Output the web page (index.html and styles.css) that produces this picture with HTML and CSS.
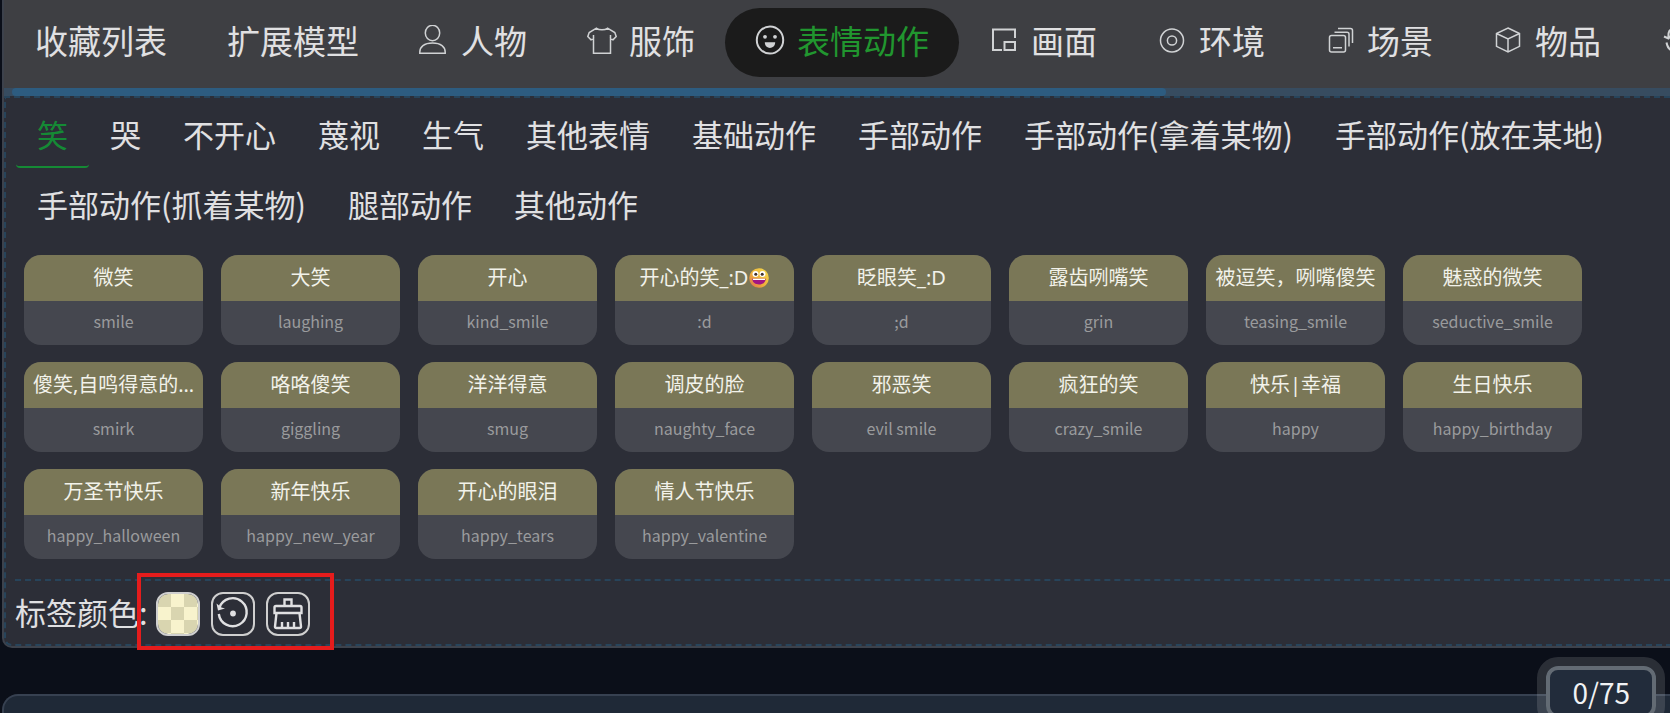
FILE: index.html
```html
<!DOCTYPE html>
<html lang="zh-CN">
<head>
<meta charset="utf-8">
<title>表情动作</title>
<link rel="stylesheet" href="styles.css">
</head>
<body>
<main class="page">
  <section class="panel">
    <nav class="groups" aria-label="分类">
      <button class="group">收藏列表</button>
      <button class="group">扩展模型</button>
      <button class="group"><svg class="icon" viewBox="0 0 30 30"><ellipse cx="13.500" cy="8" rx="7.200" ry="7.700"/><path d="M.8 28.300V27C.8 22 5 18 13.500 18s12.700 4 12.700 9v1.300z"/></svg>人物</button>
      <button class="group"><svg class="icon" viewBox="0 0 30 30"><path d="M9.500 3.200 2.200 7.500.8 11.500l3.200 3.300 2.500-1V28.300h17V13.800l2.500 1 3.200-3.300-1.400-4-7.300-4.300c-2.500 2.200-8.500 2.200-11 0zM6.500 10v4M23.500 10v4"/></svg>服饰</button>
      <button class="group active"><svg class="icon bold" viewBox="0 0 30 30"><ellipse cx="15" cy="15" rx="13.200" ry="13.600"/><circle class="solid" cx="10" cy="11.800" r="1.900"/><circle class="solid" cx="20" cy="11.800" r="1.900"/><path class="solid" d="M9.800 17.300h10.400c0 7.500-10.400 7.500-10.400 0z"/></svg>表情动作</button>
      <button class="group"><svg class="icon bold" viewBox="0 0 30 30"><path d="M13 25H4V4.500h22V13M15.500 17H26v8H15.500z"/></svg>画面</button>
      <button class="group"><svg class="icon" viewBox="0 0 30 30"><circle cx="15" cy="15.500" r="11.500"/><circle cx="15" cy="15.500" r="4.600"/></svg>环境</button>
      <button class="group"><svg class="icon" viewBox="0 0 30 30"><rect x="4.500" y="10.500" width="16" height="16.500" rx="2"/><path d="M9.500 7.200H22a2 2 0 0 1 2 2V21.500M13 3.500h12.500a2 2 0 0 1 2 2V18M8 22.800h9"/></svg>场景</button>
      <button class="group"><svg class="icon" viewBox="0 0 30 30"><path d="M15 3 26.500 8.500v12.800L15 27 3.500 21.300V8.500zM3.500 8.500 15 14l11.500-5.500M15 14v13"/></svg>物品</button>
      <button class="group" aria-label="更多"><svg class="icon bold" viewBox="0 0 30 30"><path d="M14 4C8 4 7 6.500 7.500 13.500M3 11.500l4.500 2 3.500-4M5.500 17.500c1 6 3.500 8.500 9 9M18 5c5 1 8 5 8 10s-3 9-7 11"/></svg></button>
    </nav>
    <div class="scrollbar"><div class="thumb"></div></div>

    <div class="content">
      <nav class="subgroups" aria-label="子分类">
        <button class="subgroup current">笑</button>
        <button class="subgroup">哭</button>
        <button class="subgroup">不开心</button>
        <button class="subgroup">蔑视</button>
        <button class="subgroup">生气</button>
        <button class="subgroup">其他表情</button>
        <button class="subgroup">基础动作</button>
        <button class="subgroup">手部动作</button>
        <button class="subgroup">手部动作(拿着某物)</button>
        <button class="subgroup">手部动作(放在某地)</button>
        <button class="subgroup">手部动作(抓着某物)</button>
        <button class="subgroup">腿部动作</button>
        <button class="subgroup">其他动作</button>
      </nav>

      <div class="tags">
        <button class="tag"><span class="name">微笑</span><span class="value">smile</span></button>
        <button class="tag"><span class="name">大笑</span><span class="value">laughing</span></button>
        <button class="tag"><span class="name">开心</span><span class="value">kind_smile</span></button>
        <button class="tag"><span class="name">开心的笑_:D<svg class="emoji" viewBox="0 0 20 20"><defs><linearGradient id="face" x1="1" y1="0" x2="0" y2="1"><stop offset="0" stop-color="#f6e04e"/><stop offset=".55" stop-color="#eeb03a"/><stop offset="1" stop-color="#dc6c52"/></linearGradient></defs><circle cx="10" cy="10" r="9.800" fill="url(#face)"/><circle cx="6.500" cy="6" r="3" fill="#fff"/><circle cx="13.500" cy="6" r="3" fill="#fff"/><circle cx="6.800" cy="6.200" r="1.500" fill="#40302c"/><circle cx="13.200" cy="6.200" r="1.500" fill="#40302c"/><path d="M3.300 10.800h13.400c0 7.600-13.400 7.600-13.400 0z" fill="#a11683"/><path d="M4 10.800h12v1.200H4z" fill="#fff"/></svg></span><span class="value">:d</span></button>
        <button class="tag"><span class="name">眨眼笑_:D</span><span class="value">;d</span></button>
        <button class="tag"><span class="name">露齿咧嘴笑</span><span class="value">grin</span></button>
        <button class="tag"><span class="name">被逗笑，咧嘴傻笑</span><span class="value">teasing_smile</span></button>
        <button class="tag"><span class="name">魅惑的微笑</span><span class="value">seductive_smile</span></button>
        <button class="tag"><span class="name">傻笑,自鸣得意的…</span><span class="value">smirk</span></button>
        <button class="tag"><span class="name">咯咯傻笑</span><span class="value">giggling</span></button>
        <button class="tag"><span class="name">洋洋得意</span><span class="value">smug</span></button>
        <button class="tag"><span class="name">调皮的脸</span><span class="value">naughty_face</span></button>
        <button class="tag"><span class="name">邪恶笑</span><span class="value">evil smile</span></button>
        <button class="tag"><span class="name">疯狂的笑</span><span class="value">crazy_smile</span></button>
        <button class="tag"><span class="name">快乐|幸福</span><span class="value">happy</span></button>
        <button class="tag"><span class="name">生日快乐</span><span class="value">happy_birthday</span></button>
        <button class="tag"><span class="name">万圣节快乐</span><span class="value">happy_halloween</span></button>
        <button class="tag"><span class="name">新年快乐</span><span class="value">happy_new_year</span></button>
        <button class="tag"><span class="name">开心的眼泪</span><span class="value">happy_tears</span></button>
        <button class="tag"><span class="name">情人节快乐</span><span class="value">happy_valentine</span></button>
      </div>

      <div class="colors">
        <span class="label">标签颜色:</span>
        <div class="tools">
          <button class="tool swatch" aria-label="选择颜色"></button>
          <button class="tool" aria-label="重置"><svg viewBox="0 0 40 40"><path d="M6.500 13.500A14 14 0 1 1 5.800 20"/><path class="solid" d="M3.500 9.500 5 16.500l7-2-3.500-1z"/><circle class="solid" cx="20" cy="19.500" r="2.900"/></svg></button>
          <button class="tool" aria-label="清除"><svg viewBox="0 0 40 40"><path d="M16.500 12V5.500h7V12M8 12h24a1.500 1.500 0 0 1 1.500 1.500V19h-27v-5.500A1.500 1.500 0 0 1 8 12zM8.500 19 7 32.500a1.500 1.500 0 0 0 1.500 1.500h23a1.500 1.500 0 0 0 1.500-1.500L31.500 19M14 28v5.500M20 28v5.500M26 28v5.500"/></svg></button>
        </div>
      </div>
    </div>
  </section>

  <section class="prompt">
    <div class="counter">0/75</div>
  </section>
</main>
</body>
</html>
```
FILE: styles.css
```css
* { box-sizing: border-box; }

body {
  margin: 0;
  background: #0b0f19;
  color: #e0e0e2;
  font-family: "Noto Sans CJK SC", sans-serif;
}

button {
  margin: 0;
  padding: 0;
  border: 0;
  background: none;
  color: inherit;
  font: inherit;
  cursor: pointer;
}

svg {
  fill: none;
  stroke: currentColor;
  stroke-width: 2.4;
}

.solid { fill: currentColor; stroke: none; }

.page {
  display: flex;
  flex-direction: column;
  gap: 46px;
  height: 100vh;
  padding-left: 2px;
  overflow: hidden;
}

.panel {
  flex: none;
  border: solid #3d424c;
  border-width: 0 0 2px 2px;
  border-bottom-left-radius: 10px;
  background: #2c2e37;
}

.groups {
  display: flex;
  height: 88px;
  padding: 8px 0 11px 1px;
  background: #3e3f43;
  overflow: hidden;
}

.group {
  display: flex;
  flex: none;
  align-items: center;
  gap: 12px;
  padding: 0 30px 5px;
  border-radius: 35px;
  font-size: 33px;
  line-height: 48px;
  white-space: nowrap;
}

.group.active { background: #1b1b1b; color: #21962f; }

.icon {
  width: 30px;
  height: 30px;
  color: #d0d2d4;
  stroke-width: 1.5;
}

.icon.bold { stroke-width: 2; }

.scrollbar {
  height: 8px;
  padding-left: 8px;
  background: #374c60;
}

.thumb {
  width: 69.6%;
  height: 8px;
  border-radius: 4px;
  background: #2d5c80;
}

.content {
  padding-left: 9px;
  border: dashed #27445b;
  border-width: 2px 0 2px 2px;
  border-bottom-left-radius: 8px;
}

.subgroups { display: flex; flex-wrap: wrap; padding-left: 1px; }

.subgroup {
  height: 70px;
  padding: 4px 21px 0;
  border-bottom: 2px solid transparent;
  border-radius: 4px;
  font-size: 31px;
  line-height: 44px;
}

.subgroup.current { border-color: #158a35; color: #158a35; }

.tags {
  display: grid;
  grid-template-columns: repeat(auto-fill, 179px);
  gap: 17px 18px;
  padding: 17px 9px 20px;
}

.tag {
  display: flex;
  flex-direction: column;
  height: 90px;
  border-radius: 17px;
  background: #45474f;
  overflow: hidden;
  text-align: center;
}

.name {
  width: 100%;
  height: 46px;
  padding: 0 8px;
  background: #7a7757;
  color: #f2f2ea;
  font-family: "Noto Sans", "Noto Sans CJK SC", sans-serif;
  font-size: 20px;
  line-height: 46px;
  white-space: nowrap;
}

.value {
  width: 100%;
  color: #9a9b9d;
  font-size: 16px;
  line-height: 40px;
}

.emoji {
  width: 20px;
  height: 20px;
  margin-left: 1px;
  vertical-align: -3px;
  stroke: none;
}

.colors {
  display: flex;
  align-items: center;
  height: 65px;
  border-top: 2px dashed #27445b;
}

.label {
  width: 122px;
  padding-bottom: 2px;
  font-size: 31px;
  line-height: 44px;
  white-space: nowrap;
}

.tools {
  display: flex;
  gap: 11px;
  margin: -7px 0 -5px;
  padding: 15px 20px 10px 15px;
  border: 4px solid #e51c1c;
  z-index: 1;
}

.tool {
  width: 44px;
  height: 44px;
  border: 2px solid #cfcfcf;
  border-radius: 12px;
}

.tool svg { display: block; width: 40px; height: 40px; }

.swatch {
  background: conic-gradient(#f8f3cd 25%, #d9d5b0 0 50%, #f8f3cd 0 75%, #d9d5b0 0) 0 0 / 26px 26px padding-box;
}

.prompt {
  position: relative;
  flex: 1;
  border: solid #374151;
  border-width: 2px 0 0 2px;
  border-top-left-radius: 16px;
  background: #1f2937;
}

.counter {
  position: absolute;
  top: -30px;
  right: 14px;
  padding: 0 22px;
  border: 4px solid #636b74;
  border-radius: 12px;
  outline: 9px solid rgba(255, 255, 255, .13);
  background: #222c3b;
  color: #f0f2f4;
  font-size: 28px;
  line-height: 44px;
}
```
